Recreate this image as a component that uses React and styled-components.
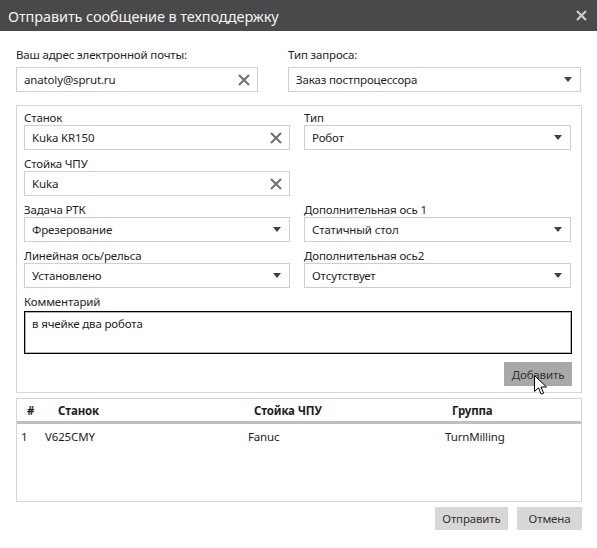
import React from "react";
import styled, { createGlobalStyle } from "styled-components";

const GlobalStyle = createGlobalStyle`
  html, body {
    margin: 0;
    padding: 0;
    background: #ffffff;
  }
  * {
    box-sizing: border-box;
  }
`;

const Window = styled.div`
  position: relative;
  width: 597px;
  height: 548px;
  background: #ffffff;
  font-family: "Noto Sans", "Open Sans", sans-serif;
  font-size: 11.5px;
  letter-spacing: -0.15px;
  color: #1e1e1e;
  overflow: hidden;
`;

const TitleBar = styled.div`
  height: 31px;
  background: #494949;
  display: flex;
  align-items: center;
  justify-content: space-between;
  padding: 0 10px 0 8px;
  color: #f2f2f2;
  font-size: 14.5px;
  letter-spacing: -0.1px;
`;

const CloseButton = styled.div`
  width: 12px;
  height: 12px;
  display: flex;
  align-items: center;
  justify-content: center;
`;

const Body = styled.div`
  padding: 16px 15px 0 16px;
`;

const TopRow = styled.div`
  display: grid;
  grid-template-columns: 242px 293px;
  column-gap: 30px;
`;

const Label = styled.div`
  height: ${(p) => p.$h || 15}px;
  line-height: 15px;
  white-space: nowrap;
  color: #1e1e1e;
`;

const Field = styled.div`
  display: flex;
  flex-direction: column;
`;

const InputBox = styled.div`
  height: 25px;
  border: 1px solid #cfcfcf;
  background: #ffffff;
  display: flex;
  align-items: center;
  justify-content: space-between;
  padding: 0 7px 0 7px;
  color: #1e1e1e;
  white-space: nowrap;
`;

const GroupBox = styled.div`
  margin-top: 13px;
  border: 1px solid #d6d6d6;
  padding: 4px 9px 6px 7px;
`;

const FieldGrid = styled.div`
  display: grid;
  grid-template-columns: 266px 267px;
  column-gap: 14px;
  row-gap: 6px;
`;

const CommentArea = styled.div`
  margin-top: 6px;
`;

const TextArea = styled.div`
  height: 43px;
  border: 1px solid #000000;
  box-shadow: inset 0 0 0 1px rgba(0, 0, 0, 0.3);
  padding: 3px 7px;
  line-height: 17px;
`;

const ButtonRow = styled.div`
  display: flex;
  justify-content: flex-end;
  gap: 9px;
  margin-top: ${(p) => p.$top || 0}px;
`;

const Button = styled.div`
  height: ${(p) => p.$h || 23}px;
  width: ${(p) => p.$w}px;
  background: ${(p) => (p.$hover ? "#a8a8a8" : "#d7d7d7")};
  color: #333333;
  display: flex;
  align-items: center;
  justify-content: center;
  white-space: nowrap;
`;

const Table = styled.div`
  margin-top: 5px;
  height: 104px;
  border: 1px solid #d6d6d6;
`;

const HeaderRow = styled.div`
  display: grid;
  grid-template-columns: 24px 203px 197px 1fr;
  height: 25px;
  border-bottom: 3px solid #bfbfbf;
  align-items: center;
  font-weight: 700;
  color: #1e1e1e;
`;

const DataRow = styled.div`
  display: grid;
  grid-template-columns: 24px 203px 197px 1fr;
  height: 24px;
  align-items: center;
  color: #1e1e1e;
`;

const Cell = styled.div`
  padding-left: ${(p) => p.$pl || 0}px;
  white-space: nowrap;
`;

const CursorWrap = styled.div`
  position: absolute;
  left: 534px;
  top: 375px;
  width: 14px;
  height: 21px;
  pointer-events: none;
`;

const ClearIcon = () => (
  <svg width="12" height="12" viewBox="0 0 12 12">
    <path d="M1 1 L11 11 M11 1 L1 11" stroke="#6e6e6e" strokeWidth="2" fill="none" />
  </svg>
);

const ArrowIcon = () => (
  <svg width="8" height="5" viewBox="0 0 8 5" style={{ marginRight: 1 }}>
    <path d="M0 0 L8 0 L4 5 Z" fill="#404040" />
  </svg>
);

const TextInput = ({ value }) => (
  <InputBox>
    <span>{value}</span>
    <ClearIcon />
  </InputBox>
);

const Select = ({ value }) => (
  <InputBox>
    <span>{value}</span>
    <ArrowIcon />
  </InputBox>
);

const App = () => {
  return (
    <Window>
      <GlobalStyle />
      <TitleBar>
        <span>Отправить сообщение в техподдержку</span>
        <CloseButton>
          <svg width="11" height="11" viewBox="0 0 11 11">
            <path d="M1 1 L10 10 M10 1 L1 10" stroke="#cfcfcf" strokeWidth="2.2" fill="none" />
          </svg>
        </CloseButton>
      </TitleBar>
      <Body>
        <TopRow>
          <Field>
            <Label $h={20}>Ваш адрес электронной почты:</Label>
            <TextInput value="anatoly@sprut.ru" />
          </Field>
          <Field>
            <Label $h={20}>Тип запроса:</Label>
            <Select value="Заказ постпроцессора" />
          </Field>
        </TopRow>

        <GroupBox>
          <FieldGrid>
            <Field>
              <Label>Станок</Label>
              <TextInput value="Kuka KR150" />
            </Field>
            <Field>
              <Label>Тип</Label>
              <Select value="Робот" />
            </Field>
            <Field>
              <Label>Стойка ЧПУ</Label>
              <TextInput value="Kuka" />
            </Field>
            <div />
            <Field>
              <Label>Задача РТК</Label>
              <Select value="Фрезерование" />
            </Field>
            <Field>
              <Label>Дополнительная ось 1</Label>
              <Select value="Статичный стол" />
            </Field>
            <Field>
              <Label>Линейная ось/рельса</Label>
              <Select value="Установлено" />
            </Field>
            <Field>
              <Label>Дополнительная ось2</Label>
              <Select value="Отсутствует" />
            </Field>
          </FieldGrid>
          <CommentArea>
            <Label $h={17}>Комментарий</Label>
            <TextArea>в ячейке два робота</TextArea>
          </CommentArea>
          <ButtonRow $top={8}>
            <Button $w={68} $h={24} $hover>
              Добавить
            </Button>
          </ButtonRow>
        </GroupBox>

        <Table>
          <HeaderRow>
            <Cell $pl={10}>#</Cell>
            <Cell $pl={17}>Станок</Cell>
            <Cell $pl={10}>Стойка ЧПУ</Cell>
            <Cell $pl={11}>Группа</Cell>
          </HeaderRow>
          <DataRow>
            <Cell $pl={4}>1</Cell>
            <Cell $pl={4}>V625CMY</Cell>
            <Cell $pl={4}>Fanuc</Cell>
            <Cell $pl={4}>TurnMilling</Cell>
          </DataRow>
        </Table>

        <ButtonRow $top={5}>
          <Button $w={73}>Отправить</Button>
          <Button $w={65}>Отмена</Button>
        </ButtonRow>
      </Body>

      <CursorWrap>
        <svg width="14" height="21" viewBox="0 0 14 21">
          <path
            d="M0.5 0.5 L0.5 16.5 L4.5 12.8 L7.2 19.2 L9.6 18.2 L7 12 L12.5 12 Z"
            fill="#ffffff"
            stroke="#000000"
            strokeWidth="1"
            strokeLinejoin="miter"
          />
        </svg>
      </CursorWrap>
    </Window>
  );
};

export default App;
